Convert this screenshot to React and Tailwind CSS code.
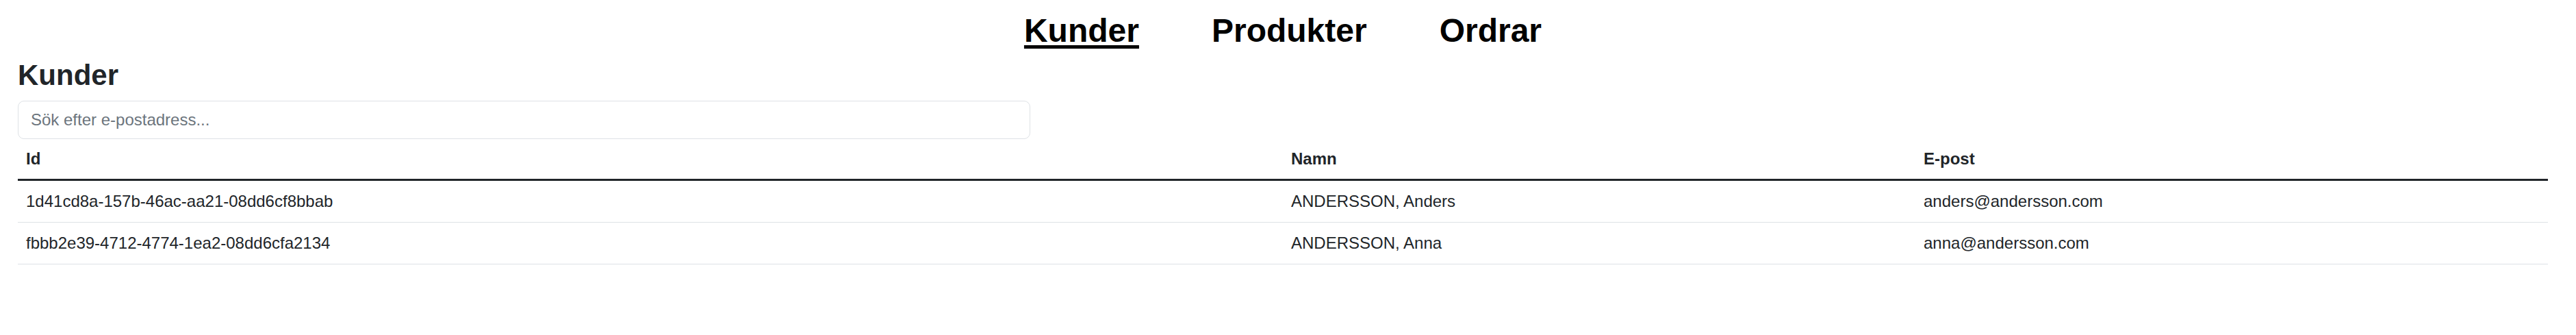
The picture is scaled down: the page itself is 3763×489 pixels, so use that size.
import { useState } from 'react'

const CUSTOMERS = [
  { id: '1d41cd8a-157b-46ac-aa21-08dd6cf8bbab', name: 'ANDERSSON, Anders', email: 'anders@andersson.com' },
  { id: 'fbbb2e39-4712-4774-1ea2-08dd6cfa2134', name: 'ANDERSSON, Anna', email: 'anna@andersson.com' },
]

const NAV = ['Kunder', 'Produkter', 'Ordrar']

export default function App() {
  const [query, setQuery] = useState('')
  const rows = CUSTOMERS.filter(c => c.email.toLowerCase().includes(query.toLowerCase()))

  return (
    <div className="min-h-[489px] bg-white pl-[26px] pr-[41px] font-['Liberation_Sans',Arial,sans-serif] text-[#212529]">
      {/* Top nav */}
      <nav className="flex justify-center gap-[106px] pt-[16px]">
        {NAV.map((item, i) => (
          <a
            key={item}
            href="#"
            className={`text-[48px] font-bold leading-[1.2] text-black ${i === 0 ? 'underline decoration-[5px] underline-offset-[5px]' : 'no-underline'}`}
          >
            {item}
          </a>
        ))}
      </nav>

      <h3 className="mt-[11px] mb-[12px] text-[42px] font-bold leading-[1.2]">Kunder</h3>

      <input
        value={query}
        onChange={e => setQuery(e.target.value)}
        placeholder="Sök efter e-postadress..."
        className="block h-[56px] w-[1479px] rounded-[9px] border-[1.5px] border-[#dee2e6] bg-white px-[18px] text-[24px] leading-[1.5] text-[#212529] outline-none placeholder:text-[#6c757d]"
      />

      <table className="w-full border-collapse text-left text-[24px] leading-[1.5]">
        <thead>
          <tr className="border-b-[3px] border-[#212529]">
            <th className="w-1/2 px-[12px] py-[11px] font-bold">Id</th>
            <th className="w-1/4 px-[12px] py-[11px] font-bold">Namn</th>
            <th className="w-1/4 px-[12px] py-[11px] font-bold">E-post</th>
          </tr>
        </thead>
        <tbody>
          {rows.map(c => (
            <tr key={c.id} className="border-b border-[#dee2e6]">
              <td className="px-[12px] py-[12px]">{c.id}</td>
              <td className="px-[12px] py-[12px]">{c.name}</td>
              <td className="px-[12px] py-[12px]">{c.email}</td>
            </tr>
          ))}
        </tbody>
      </table>
    </div>
  )
}
